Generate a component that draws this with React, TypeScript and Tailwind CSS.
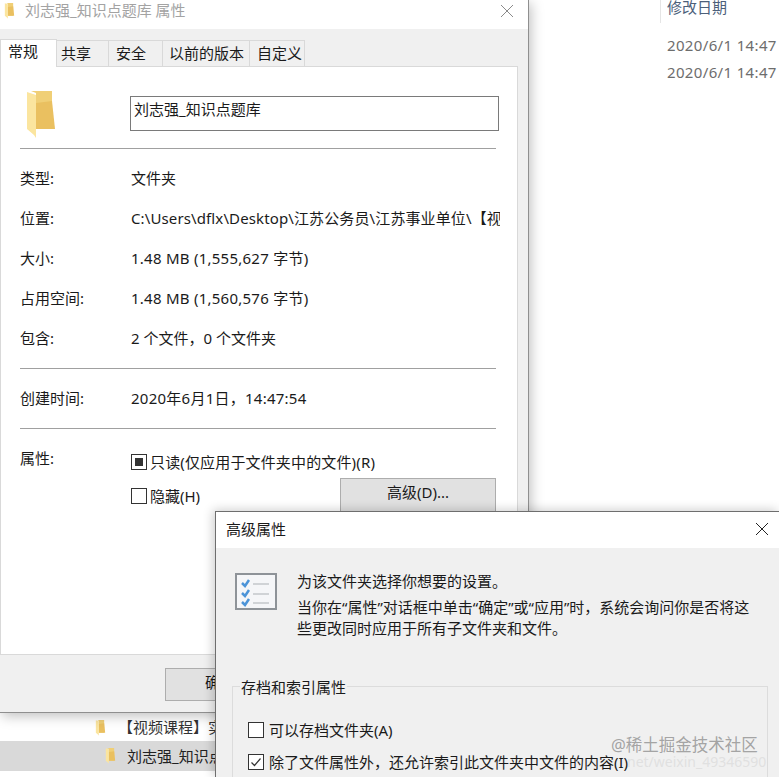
import type { ReactNode } from 'react';

const font = { fontFamily: '"Noto Sans", "Noto Sans CJK SC", sans-serif' };

function FolderIcon({ className }: { className: string }) {
  return (
    <svg viewBox="0 0 28 48" className={`shrink-0 ${className}`}>
      <path d="M4 0H25V38H9V2Z" fill="#f0cf76" />
      <path d="M9 12 L25 10 L28 38 H9Z" fill="#eac060" />
      <path d="M0 1 L9 4 V47 L7 44 L0 38Z" fill="#fbe59f" />
    </svg>
  );
}

function Row({ label, wide, children }: { label: string; wide?: boolean; children: ReactNode }) {
  return (
    <div className="flex h-10 items-center">
      <div className="w-[111px] shrink-0">{label}</div>
      {/* the path runs past the rules and gets clipped at the edge of its own box */}
      <div className={wide ? 'w-[369px] shrink-0 overflow-hidden tracking-[0.12px] whitespace-nowrap' : 'min-w-0 flex-1 whitespace-nowrap'}>
        {children}
      </div>
    </div>
  );
}

function Rule() {
  return <div className="h-px bg-[#a0a0a0]" />;
}

function Checkbox({ mark }: { mark?: 'square' | 'check' }) {
  return (
    <span className="flex size-4 shrink-0 items-center justify-center border border-[#333] bg-white">
      {mark === 'square' && <span className="size-2 bg-[#333]" />}
      {mark === 'check' && (
        <svg viewBox="0 0 14 14" className="size-3.5" fill="none" stroke="#333" strokeWidth="1.2">
          <path d="M2.5 7.5 L5.5 10.5 L11.5 3.5" />
        </svg>
      )}
    </span>
  );
}

function Tab({ label, className }: { label: string; className: string }) {
  return (
    <div className={`flex h-[26px] items-center border-t border-r border-[#d9d9d9] bg-[#f0f0f0] ${className}`}>
      {label}
    </div>
  );
}

function PropertiesWindow() {
  return (
    <div className="absolute top-0 left-0 flex h-[713px] w-[529px] flex-col border-r border-b border-[#8f8f8f] bg-[#f0f0f0] shadow-[2px_3px_12px_rgba(0,0,0,0.25)]">
      <div className="flex h-[29px] shrink-0 items-center bg-white pr-[14px] pb-[8px] pl-1">
        <FolderIcon className="h-[16px] w-[11px]" />
        <div className="ml-[10px] flex-1 text-[#a3a3a3]">刘志强_知识点题库 属性</div>
        <svg viewBox="0 0 14 14" className="size-[14px]" fill="none" stroke="#8a8a8a" strokeWidth="1">
          <path d="M1 1 L13 13 M13 1 L1 13" />
        </svg>
      </div>

      <div className="flex h-[37px] shrink-0 items-end">
        <div className="relative z-10 -mb-px flex h-[28px] w-[57px] items-center border-t border-r border-l border-[#d9d9d9] bg-white pb-1 pl-[7px]">常规</div>
        <Tab label="共享" className="w-[52px] pl-[4px]" />
        <Tab label="安全" className="w-[54px] pl-[7px]" />
        <Tab label="以前的版本" className="w-[87px] pl-[6px]" />
        <Tab label="自定义" className="w-[55px] pl-[7px]" />
      </div>

      <div className="mr-[10px] flex h-[589px] shrink-0 flex-col border border-[#d9d9d9] bg-white pr-[21px] pl-[19px]">
        <div className="flex h-[81px] shrink-0 items-start pt-[24px]">
          <FolderIcon className="ml-[7px] h-[48px] w-[28px]" />
          <div className="mt-[5px] ml-[75px] flex h-[35px] w-[369px] shrink-0 items-center border border-[#7a7a7a] pb-[8px] pl-[3px]">刘志强_知识点题库</div>
        </div>
        <Rule />
        <div className="h-[9px]" />
        <Row label="类型:">文件夹</Row>
        <Row label="位置:" wide>C:\Users\dflx\Desktop\江苏公务员\江苏事业单位\【视频课程】实</Row>
        <Row label="大小:"><span className="tracking-[0.25px]">1.48 MB (1,555,627 字节)</span></Row>
        <Row label="占用空间:"><span className="tracking-[0.25px]">1.48 MB (1,560,576 字节)</span></Row>
        <Row label="包含:">2 个文件，0 个文件夹</Row>
        <div className="h-[10px]" />
        <Rule />
        <div className="h-[9px]" />
        <Row label="创建时间:"><span className="tracking-[0.25px]">2020年6月1日，14:47:54</span></Row>
        <div className="h-[10px]" />
        <Rule />
        <div className="mt-[18px] flex">
          <div className="w-[111px] shrink-0">属性:</div>
          <div className="flex-1 pt-[4px]">
            <div className="flex items-center gap-[3px]">
              <Checkbox mark="square" />
              <span className="tracking-[0.15px]">只读(仅应用于文件夹中的文件)(R)</span>
            </div>
            <div className="mt-[5px] flex items-start">
              <div className="mt-[6px] flex items-center gap-[3px]">
                <Checkbox />
                <span>隐藏(H)</span>
              </div>
              <div className="mt-[-1px] ml-auto flex h-[34px] w-[156px] items-center justify-center border border-[#adadad] bg-[#e1e1e1] pb-1">
                高级(D)...
              </div>
            </div>
          </div>
        </div>
      </div>

      <div className="mt-[13px] ml-[165px] flex h-[33px] w-[156px] items-center justify-center border border-[#adadad] bg-[#e1e1e1] pr-[46px] pb-1">
        确定
      </div>
    </div>
  );
}

function AdvancedWindow() {
  return (
    <div className="absolute top-[511px] left-[215px] flex h-[266px] w-[564px] flex-col border-t border-l border-[#6e6e6e] bg-[#f0f0f0] shadow-[-2px_-1px_10px_rgba(0,0,0,0.2)]">
      <div className="flex h-[36px] shrink-0 items-center justify-between bg-white pr-[10px] pb-[2px] pl-[10px]">
        <span>高级属性</span>
        <svg viewBox="0 0 14 14" className="size-[14px]" fill="none" stroke="#222" strokeWidth="1">
          <path d="M1 1 L13 13 M13 1 L1 13" />
        </svg>
      </div>

      <div className="flex pt-[21px] pl-[19px]">
        <svg viewBox="0 0 42 38" className="mt-[4px] h-[38px] w-[42px] shrink-0">
          <rect x="1" y="1" width="40" height="35" fill="#f5f6f8" stroke="#8e9398" strokeWidth="2" />
          <path d="M7 10 L10 13 L14 7 M7 20 L10 23 L14 17 M7 29 L10 32 L14 26" fill="none" stroke="#4c94d8" strokeWidth="2.5" />
          <path d="M18 11 H34 M18 21 H34 M18 30 H34" stroke="#c4c7ca" strokeWidth="1.5" />
        </svg>
        <div className="ml-[20px] w-[458px]">
          <div className="leading-[24px]">为该文件夹选择你想要的设置。</div>
          <div className="mt-[4px] leading-[21px]">当你在“属性”对话框中单击“确定”或“应用”时，系统会询问你是否将这些更改同时应用于所有子文件夹和文件。</div>
        </div>
      </div>

      <div className="relative mt-[47px] mr-[11px] ml-[16px] flex-1 border border-b-0 border-[#dcdcdc] pt-[32px] pl-[15px]">
        <div className="absolute -top-[11px] left-[7px] bg-[#f0f0f0] px-px">存档和索引属性</div>
        <div className="flex items-center gap-[5px]">
          <Checkbox />
          <span>可以存档文件夹(A)</span>
        </div>
        <div className="mt-[9.5px] flex items-center gap-[5px] whitespace-nowrap">
          <Checkbox mark="check" />
          <span>除了文件属性外，还允许索引此文件夹中文件的内容(I)</span>
        </div>
      </div>
    </div>
  );
}

function ExplorerBackground() {
  return (
    <div className="absolute inset-0 bg-white">
      <div className="absolute top-0 left-[660px] h-[23px] w-px bg-[#e5e5e5]" />
      <div className="absolute top-[-4px] left-[667px] text-[#4c607a]">修改日期</div>
      <div className="absolute top-[34px] left-[667px] tracking-[0.35px] text-[#6d6d6d]">2020/6/1 14:47</div>
      <div className="absolute top-[61px] left-[667px] tracking-[0.35px] text-[#6d6d6d]">2020/6/1 14:47</div>
      <div className="absolute top-[714px] left-0 flex h-[27px] w-[240px] items-center pl-[95px]">
        <FolderIcon className="h-[16px] w-[11px]" />
        <span className="ml-[12px] whitespace-nowrap text-[#333]">【视频课程】实</span>
      </div>
      <div className="absolute top-[741px] left-0 flex h-[30px] w-[240px] items-center bg-[#d9d9d9] pl-[105px]">
        <FolderIcon className="h-[16px] w-[11px]" />
        <span className="ml-[11px] whitespace-nowrap text-[#222]">刘志强_知识点题库</span>
      </div>
    </div>
  );
}

export default function App() {
  return (
    <div className="relative h-[777px] w-[779px] overflow-hidden text-[15px] text-[#1a1a1a]" style={font}>
      <ExplorerBackground />
      <PropertiesWindow />
      <AdvancedWindow />
      {/* watermark */}
      <div className="absolute top-[733px] left-[611px] text-[16.5px] whitespace-nowrap text-[#8f8f8f]/80">@稀土掘金技术社区</div>
      <div className="absolute top-[751px] left-[627px] text-[14px] whitespace-nowrap text-[#dcdcdc]/80">net/weixin_49346590</div>
    </div>
  );
}
